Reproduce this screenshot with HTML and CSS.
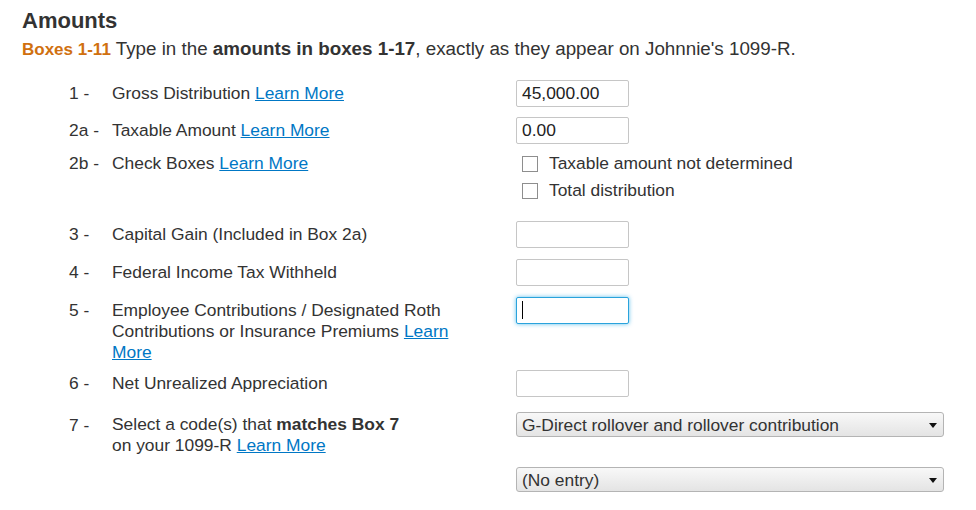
FILE: index.html
```html
<!DOCTYPE html>
<html lang="en">
<head>
<meta charset="utf-8">
<title>Amounts</title>
<link rel="stylesheet" href="styles.css">
</head>
<body>
<div class="page">
  <h1 class="title">Amounts</h1>
  <p class="intro"><span class="boxes">Boxes 1-11</span> Type in the <b>amounts in boxes 1-17</b>, exactly as they appear on Johnnie's 1099-R.</p>

  <div class="form">
    <div class="row">
      <div class="num">1 -</div>
      <div class="label">Gross Distribution <a href="#">Learn More</a></div>
      <div class="field"><input class="text-input" type="text" value="45,000.00"></div>
    </div>

    <div class="row row-tight">
      <div class="num">2a -</div>
      <div class="label">Taxable Amount <a href="#">Learn More</a></div>
      <div class="field"><input class="text-input" type="text" value="0.00"></div>
    </div>

    <div class="row row-checks">
      <div class="num">2b -</div>
      <div class="label">Check Boxes <a href="#">Learn More</a></div>
      <div class="field checks">
        <label class="check"><input type="checkbox" class="box">Taxable amount not determined</label>
        <label class="check"><input type="checkbox" class="box">Total distribution</label>
      </div>
    </div>

    <div class="row row-wide">
      <div class="num">3 -</div>
      <div class="label">Capital Gain (Included in Box 2a)</div>
      <div class="field"><input class="text-input" type="text" value=""></div>
    </div>

    <div class="row row-wide">
      <div class="num">4 -</div>
      <div class="label">Federal Income Tax Withheld</div>
      <div class="field"><input class="text-input" type="text" value=""></div>
    </div>

    <div class="row row-wide">
      <div class="num">5 -</div>
      <div class="label">Employee Contributions / Designated Roth Contributions or Insurance Premiums <a href="#">Learn More</a></div>
      <div class="field"><span class="caret-wrap"><input class="text-input focused" type="text" value=""></span></div>
    </div>

    <div class="row row-six">
      <div class="num">6 -</div>
      <div class="label">Net Unrealized Appreciation</div>
      <div class="field"><input class="text-input" type="text" value=""></div>
    </div>

    <div class="row row-seven">
      <div class="num">7 -</div>
      <div class="label label-seven">Select a code(s) that <b>matches Box 7</b><br>on your 1099-R <a href="#">Learn More</a></div>
      <div class="field selects">
        <span class="select-wrap">
          <select class="select">
            <option>G-Direct rollover and rollover contribution</option>
          </select>
        </span>
        <span class="select-wrap">
          <select class="select">
            <option>(No entry)</option>
          </select>
        </span>
      </div>
    </div>
  </div>
</div>
</body>
</html>
```

FILE: styles.css
```css
html, body {
  margin: 0;
  padding: 0;
  background: #ffffff;
}

body {
  font-family: "Liberation Sans", Arial, sans-serif;
  font-size: 17.4px;
  color: #333333;
}

.page {
  padding: 8px 0 0 22px;
}

.title {
  margin: 0;
  font-size: 22px;
  line-height: 25px;
  font-weight: bold;
  color: #333333;
}

.intro {
  margin: 5px 0 0 0;
  font-size: 18.8px;
  line-height: 21px;
}

.intro b {
  color: #333333;
}

.boxes {
  font-size: 17px;
  color: #d0700f;
  font-weight: bold;
}

.form {
  margin-top: 20px;
  padding-left: 47px;
}

.row {
  display: grid;
  grid-template-columns: 43px 404px 1fr;
  align-items: start;
  min-height: 37px;
}

.row-tight {
  min-height: 33px;
}

.row-checks {
  margin-bottom: 17px;
}

.row-wide {
  min-height: 38px;
}

.row-six {
  min-height: 42px;
}

.num,
.label {
  line-height: 21px;
  padding-top: 3px;
}

.label {
  width: 350px;
  padding-bottom: 7px;
}

.label-seven {
  padding-top: 2px;
}

.label a {
  color: #0077c5;
  text-decoration: underline;
}

.text-input {
  display: block;
  box-sizing: border-box;
  width: 113px;
  height: 27px;
  margin: 0;
  padding: 0 5px;
  border: 1px solid #c6c6c6;
  border-radius: 2px;
  font-family: "Liberation Sans", Arial, sans-serif;
  font-size: 17.4px;
  color: #222222;
  background: #ffffff;
  outline: none;
}

.text-input.focused {
  border-color: #2aa3dc;
  box-shadow: 0 0 4px rgba(40, 170, 230, 0.75);
}

.caret-wrap {
  position: relative;
  display: block;
  width: 113px;
}

.caret-wrap::after {
  content: "";
  position: absolute;
  left: 6px;
  top: 4px;
  width: 1px;
  height: 18px;
  background: #000000;
}

.checks {
  display: flex;
  flex-direction: column;
}

.check {
  display: flex;
  align-items: center;
  height: 27px;
  padding-left: 6px;
  line-height: 27px;
  font-size: 17.4px;
}

.box {
  -webkit-appearance: none;
  appearance: none;
  box-sizing: border-box;
  width: 16px;
  height: 16px;
  margin: 0 11px 0 0;
  border: 1px solid #8e8e8e;
  border-radius: 0;
  background: #ffffff;
}

.selects {
  display: flex;
  flex-direction: column;
  gap: 30px;
}

.select-wrap {
  position: relative;
  display: block;
  width: 428px;
}

.select-wrap::after {
  content: "";
  position: absolute;
  right: 7px;
  top: 11px;
  width: 0;
  height: 0;
  border-left: 4px solid transparent;
  border-right: 4px solid transparent;
  border-top: 5px solid #111111;
  pointer-events: none;
}

.select {
  -webkit-appearance: none;
  appearance: none;
  display: block;
  box-sizing: border-box;
  width: 428px;
  height: 25px;
  margin: 0;
  padding: 0 24px 0 5px;
  border: 1px solid #b4b4b4;
  border-radius: 3px;
  background: linear-gradient(#f8f8f8, #e4e4e4);
  font-family: "Liberation Sans", Arial, sans-serif;
  font-size: 17.4px;
  color: #333333;
}
```
